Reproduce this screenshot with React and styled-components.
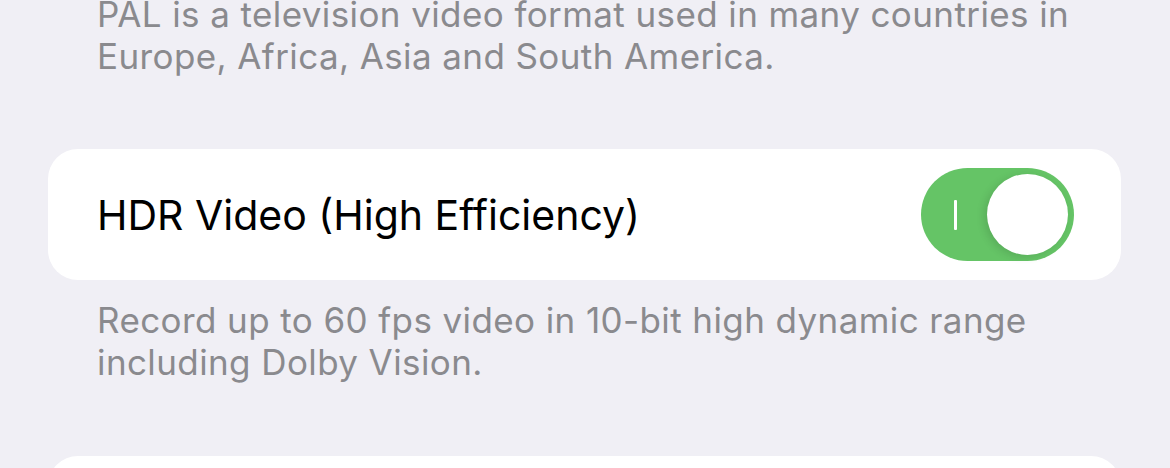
import React, { useState } from 'react';
import styled, { createGlobalStyle } from 'styled-components';

const GlobalStyle = createGlobalStyle`
  html, body {
    margin: 0;
    padding: 0;
    background: #f0eff5;
    font-family: Inter, "Liberation Sans", Arial, sans-serif;
    -webkit-font-smoothing: antialiased;
  }
`;

const Page = styled.div`
  width: 1170px;
  height: 468px;
  overflow: hidden;
  box-sizing: border-box;
  padding: 0 49px 0 48px;
  background: #f0eff5;
`;

const Note = styled.p`
  margin: ${({ $top }) => $top} 0 0 0;
  padding-left: 49px;
  font-size: 35px;
  line-height: 42px;
  color: #8a8a8e;
  letter-spacing: 0.4px;
`;

const Card = styled.div`
  margin-top: ${({ $top }) => $top};
  background: #ffffff;
  border-radius: 30px;
  display: flex;
  align-items: center;
  justify-content: space-between;
  padding: 19px 47px 19px 49px;
  min-height: 131px;
  box-sizing: border-box;
`;

const Title = styled.span`
  font-size: 41px;
  color: #000000;
  letter-spacing: 0;
`;

const Toggle = styled.button`
  position: relative;
  width: 153px;
  height: 93px;
  border: none;
  border-radius: 47px;
  padding: 0;
  cursor: pointer;
  background: ${({ $on }) => ($on ? '#65c466' : '#e9e9eb')};
  flex-shrink: 0;
`;

const OnMark = styled.span`
  position: absolute;
  left: 33px;
  top: 32px;
  width: 3px;
  height: 30px;
  background: #ffffff;
  border-radius: 1px;
`;

const Knob = styled.span`
  position: absolute;
  top: 6px;
  left: ${({ $on }) => ($on ? '66px' : '6px')};
  width: 81px;
  height: 81px;
  border-radius: 50%;
  background: #ffffff;
  box-shadow: -3px 2px 8px rgba(0, 0, 0, 0.12);
`;

function Switch() {
  const [on, setOn] = useState(true);
  return (
    <Toggle $on={on} onClick={() => setOn(!on)} aria-pressed={on}>
      {on && <OnMark />}
      <Knob $on={on} />
    </Toggle>
  );
}

export default function App() {
  return (
    <>
      <GlobalStyle />
      <Page>
        <Note $top="-7px">
          PAL is a television video format used in many countries in
          <br />
          Europe, Africa, Asia and South America.
        </Note>
        <Card $top="72px">
          <Title>HDR Video (High Efficiency)</Title>
          <Switch />
        </Card>
        <Note $top="19px">
          Record up to 60 fps video in 10-bit high dynamic range
          <br />
          including Dolby Vision.
        </Note>
        <Card $top="73px" />
      </Page>
    </>
  );
}
